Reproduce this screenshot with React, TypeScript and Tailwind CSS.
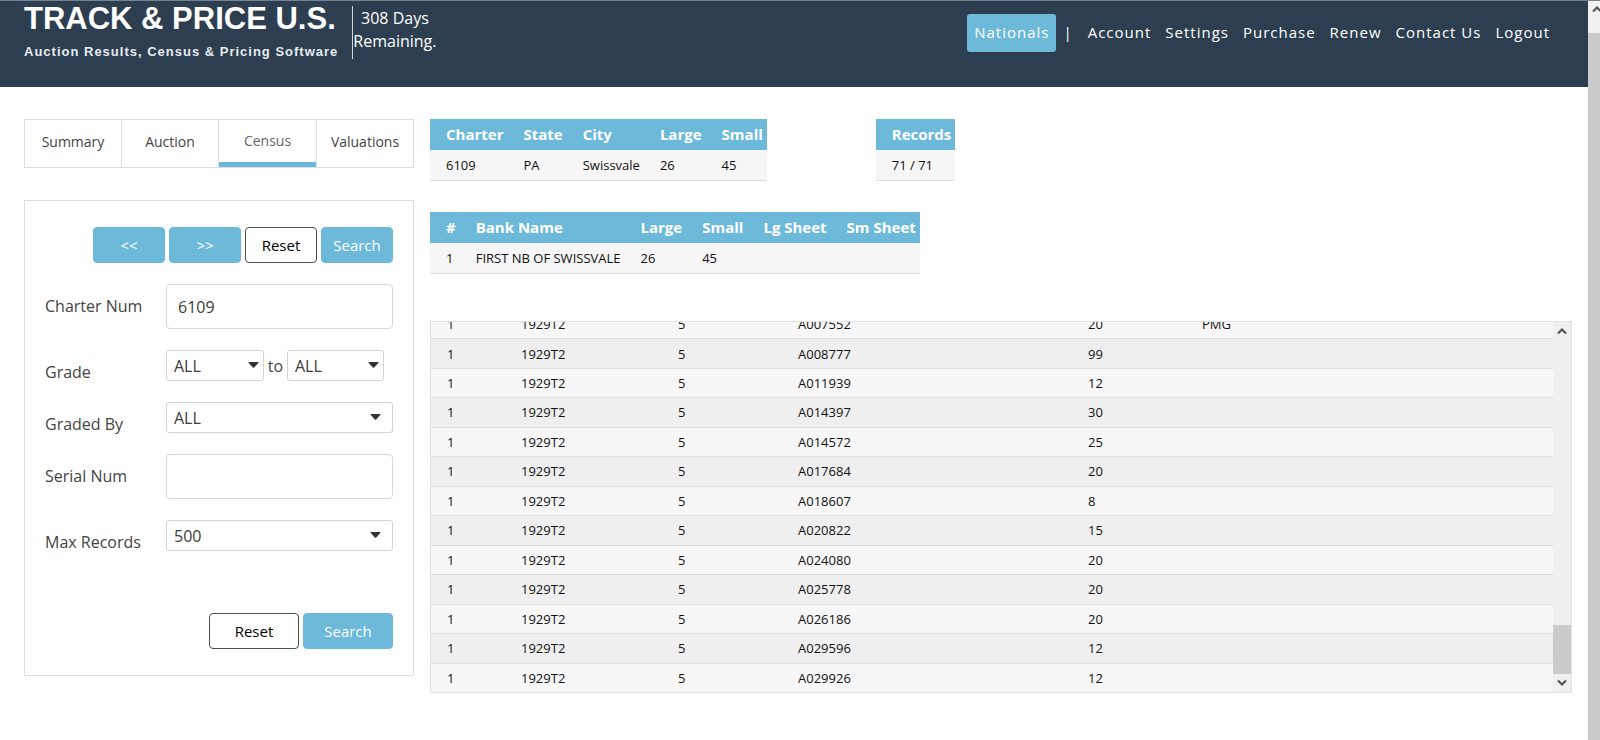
import type { ReactNode } from "react";

const NAV = ["Account", "Settings", "Purchase", "Renew", "Contact Us", "Logout"];
const TABS = ["Summary", "Auction", "Census", "Valuations"];

const NOTES = [
  ["1", "1929T2", "5", "A007552", "20", "PMG"],
  ["1", "1929T2", "5", "A008777", "99", ""],
  ["1", "1929T2", "5", "A011939", "12", ""],
  ["1", "1929T2", "5", "A014397", "30", ""],
  ["1", "1929T2", "5", "A014572", "25", ""],
  ["1", "1929T2", "5", "A017684", "20", ""],
  ["1", "1929T2", "5", "A018607", "8", ""],
  ["1", "1929T2", "5", "A020822", "15", ""],
  ["1", "1929T2", "5", "A024080", "20", ""],
  ["1", "1929T2", "5", "A025778", "20", ""],
  ["1", "1929T2", "5", "A026186", "20", ""],
  ["1", "1929T2", "5", "A029596", "12", ""],
  ["1", "1929T2", "5", "A029926", "12", ""],
];

function Chevron({ down = false }: { down?: boolean }) {
  return (
    <svg width="10" height="8" viewBox="0 0 10 8" fill="none" stroke="#555" strokeWidth="2.2" aria-hidden="true" className="shrink-0">
      <path d={down ? "M1 1.5 L5 5.5 L9 1.5" : "M1 6.5 L5 2.5 L9 6.5"} />
    </svg>
  );
}

function Button({ outline = false, className, children }: { outline?: boolean; className: string; children: ReactNode }) {
  const tone = outline ? "border-[#4a4f57] bg-white text-black" : "border-[#6cb9d9] bg-[#6cb9d9] text-white";
  return (
    <button type="button" className={`h-9 rounded border text-center text-[15px] leading-5 ${tone} ${className}`}>
      {children}
    </button>
  );
}

function Select({ id, label, value, className, caret }: { id: string; label?: string; value: string; className: string; caret: string }) {
  return (
    <div className={`relative ${className}`}>
      <select
        id={id}
        aria-label={label}
        defaultValue={value}
        className="block h-[31px] w-full appearance-none rounded-[3px] border border-[#d3d3d3] bg-white pl-[7px] text-base leading-5 text-[#3c3c3c]"
      >
        <option>{value}</option>
      </select>
      <svg width="11" height="6" viewBox="0 0 11 6" fill="#333" aria-hidden="true" className={`pointer-events-none absolute top-3 ${caret}`}>
        <path d="M0.8 0 H10.2 Q11 0 10.4 0.8 L6.2 5.4 Q5.5 6 4.8 5.4 L0.6 0.8 Q0 0 0.8 0 Z" />
      </svg>
    </div>
  );
}

function Field({ id, label, children }: { id: string; label: string; children: ReactNode }) {
  return (
    <div className="flex items-start">
      <label htmlFor={id} className="w-[121px] shrink-0 text-base leading-[45px] text-[#444]">
        {label}
      </label>
      <div className="mb-[21px] flex flex-1 items-center">{children}</div>
    </div>
  );
}

function SummaryTable({ label, head, row }: { label: string; head: string[]; row: string[] }) {
  return (
    <table aria-label={label} className="border-collapse text-left">
      <thead>
        <tr className="bg-[#6cb9d9] text-[15px] leading-[31px] text-white">
          {head.map((h) => (
            <th key={h} scope="col" className="py-0 pr-1 pl-4 font-bold whitespace-nowrap">
              {h}
            </th>
          ))}
        </tr>
      </thead>
      <tbody>
        <tr className="border-b border-[#dedede] bg-[#f6f6f6] text-[13px] leading-[30px] text-[#111]">
          {row.map((c, i) => (
            <td key={i} className="py-0 pr-1 pl-4 whitespace-nowrap">
              {c}
            </td>
          ))}
        </tr>
      </tbody>
    </table>
  );
}

function Header() {
  return (
    <header className="flex h-[87px] items-start justify-between border-t border-[#76838e] bg-[#2d3e50] pr-[38px] pl-6 text-white">
      <div className="flex pt-[5px]">
        <div className="pr-[14px] font-['Liberation_Sans',Arial,sans-serif] font-bold whitespace-nowrap">
          <div className="text-[31px] leading-[26px]">TRACK &amp; PRICE U.S.</div>
          <div className="mt-[10px] text-[13px] leading-5 tracking-[1px] text-[#e8ecf0]">
            Auction Results, Census &amp; Pricing Software
          </div>
        </div>
        <div className="h-[53px] border-l border-[#cfd5da] pt-px text-center text-base leading-[23px]">
          308 Days
          <br />
          Remaining.
        </div>
      </div>
      <nav aria-label="Main" className="flex items-start pt-[13px] text-[15px] leading-9 tracking-[1px] whitespace-nowrap">
        <a href="#nationals" className="h-[38px] rounded-[3px] bg-[#6cb9d9] px-[7px]">
          Nationals
        </a>
        <span className="px-[7px]">|</span>
        <div className="flex gap-[14px] pl-2">
          {NAV.map((n) => (
            <a key={n} href="#menu">
              {n}
            </a>
          ))}
        </div>
      </nav>
    </header>
  );
}

function Sidebar() {
  return (
    <aside className="w-[390px] shrink-0">
      <nav aria-label="Views" className="grid h-[49px] grid-cols-4 border border-[#dedede] text-center text-[14px] text-[#444]">
        {TABS.map((t) =>
          t === "Census" ? (
            <a key={t} href="#census" aria-current="page" className="border-b-[5px] border-[#6cb9d9] leading-[42px] text-[#666]">
              {t}
            </a>
          ) : (
            <a key={t} href="#view" className="border-r border-[#dedede] leading-[44px] last:border-r-0 last:border-l">
              {t}
            </a>
          ),
        )}
      </nav>

      <form className="mt-8 border border-[#dedede] px-5 pt-[26px] pb-[26px]">
        <div className="flex justify-end gap-1">
          <Button className="w-[72px]">&lt;&lt;</Button>
          <Button className="w-[72px]">&gt;&gt;</Button>
          <Button outline className="w-[72px]">
            Reset
          </Button>
          <Button className="w-[72px]">Search</Button>
        </div>

        <div className="mt-[21px]">
          <Field id="charter" label="Charter Num">
            <input
              id="charter"
              type="text"
              defaultValue="6109"
              className="h-[45px] w-full rounded border border-[#d8d8d8] px-[11px] text-base text-[#3c3c3c]"
            />
          </Field>
          <Field id="grade" label="Grade">
            <Select id="grade" value="ALL" className="w-[98px]" caret="right-[5px]" />
            <span className="w-[23px] text-center text-base leading-5 text-[#444]">to</span>
            <Select id="grade-to" label="Grade to" value="ALL" className="w-[97px]" caret="right-[5px]" />
          </Field>
          <Field id="graded-by" label="Graded By">
            <Select id="graded-by" value="ALL" className="w-full" caret="right-3" />
          </Field>
          <Field id="serial" label="Serial Num">
            <input id="serial" type="text" className="h-[45px] w-full rounded border border-[#d8d8d8] px-[11px] text-base text-[#3c3c3c]" />
          </Field>
          <Field id="max" label="Max Records">
            <Select id="max" value="500" className="w-full" caret="right-3" />
          </Field>
        </div>

        <div className="mt-[41px] flex justify-end gap-1">
          <Button outline className="w-[90px]">
            Reset
          </Button>
          <Button className="w-[90px]">Search</Button>
        </div>
      </form>
    </aside>
  );
}

function NotesTable() {
  return (
    <div className="mt-[47px] flex h-[372px] border border-[#e2e2e2]">
      <div className="flex min-w-0 flex-1 flex-col justify-end overflow-hidden">
        <table aria-label="Notes" className="h-[382px] w-full shrink-0 table-fixed border-collapse text-left text-[13px] leading-5 text-[#111]">
          <colgroup>
            <col className="w-[74px]" />
            <col className="w-[157px]" />
            <col className="w-[120px]" />
            <col className="w-[290px]" />
            <col className="w-[114px]" />
            <col />
          </colgroup>
          <tbody>
            {NOTES.map((row) => (
              <tr key={row[3]} className="border-b border-[#dedede] odd:bg-[#f7f7f7] even:bg-[#efefef] last:border-b-0">
                {row.map((c, i) => (
                  <td key={i} className="py-0 pl-4">
                    {c}
                  </td>
                ))}
              </tr>
            ))}
          </tbody>
        </table>
      </div>
      <div className="flex w-[18px] shrink-0 flex-col items-center justify-between bg-[#efefef]">
        <div className="flex h-[18px] items-center">
          <Chevron />
        </div>
        <div className="flex w-full flex-col items-center">
          <div className="h-[49px] w-full bg-[#cbcbcb]" />
          <div className="flex h-[18px] items-center">
            <Chevron down />
          </div>
        </div>
      </div>
    </div>
  );
}

export default function App() {
  return (
    <div className="flex min-h-screen bg-white font-['Open_Sans','Noto_Sans',sans-serif]">
      <div className="min-w-0 flex-1">
        <Header />
        <main className="flex items-start gap-4 pt-8 pr-4 pl-6">
          <Sidebar />
          <section className="min-w-0 flex-1">
            <div className="flex gap-[109px]">
              <SummaryTable label="Charter" head={["Charter", "State", "City", "Large", "Small"]} row={["6109", "PA", "Swissvale", "26", "45"]} />
              <SummaryTable label="Records" head={["Records"]} row={["71 / 71"]} />
            </div>
            <div className="mt-[31px] flex">
              <SummaryTable
                label="Banks"
                head={["#", "Bank Name", "Large", "Small", "Lg Sheet", "Sm Sheet"]}
                row={["1", "FIRST NB OF SWISSVALE", "26", "45", "", ""]}
              />
            </div>
            <NotesTable />
          </section>
        </main>
      </div>
      <div className="flex w-3 shrink-0 flex-col overflow-hidden border-t border-[#76838e] bg-[#cbcbcb]">
        <div className="flex h-8 bg-[#f0f0f0] pt-1 pl-1">
          <Chevron />
        </div>
      </div>
    </div>
  );
}
